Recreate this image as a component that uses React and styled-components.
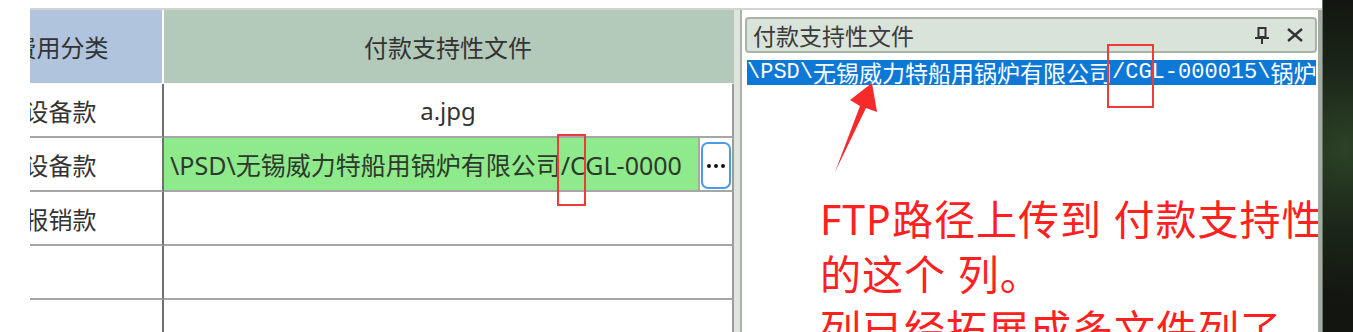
import React from "react";
import styled, { createGlobalStyle } from "styled-components";

const GlobalStyle = createGlobalStyle`
  html, body {
    margin: 0;
    padding: 0;
    background: #fff;
  }
  body {
    font-family: "Noto Sans", "Noto Sans CJK SC", sans-serif;
  }
`;

const Screen = styled.div`
  position: relative;
  display: flex;
  width: 1353px;
  height: 332px;
  overflow: hidden;
  background: #fff;
`;

const Gutter = styled.div`
  flex: none;
  width: 30px;
`;

const Workspace = styled.div`
  flex: none;
  width: 1292px;
  display: flex;
  flex-direction: column;
  padding-top: 8px;
  box-sizing: border-box;
`;

const Frame = styled.div`
  flex: 1;
  display: flex;
  min-height: 0;
  border-top: 2px solid #d3d3d3;
`;

const TableArea = styled.div`
  flex: none;
  width: 704px;
  overflow: hidden;
`;

// table is scrolled sideways, first column is partly hidden
const Grid = styled.div`
  display: grid;
  grid-template-columns: 205px 570px;
  grid-template-rows: 74px;
  grid-auto-rows: 54px;
  width: 775px;
  margin-left: -71px;
`;

const Cell = styled.div`
  box-sizing: border-box;
  display: flex;
  align-items: center;
  justify-content: center;
  overflow: hidden;
  white-space: nowrap;
  font-size: 24px;
  color: #333;
  border-bottom: 2px solid #a6a6a6;
  border-right: 2px solid ${(p) => (p.$first ? "#707070" : "#9c9c9c")};
`;

const HeadCell = styled(Cell)`
  background: ${(p) => (p.$tone === "blue" ? "#b0c4de" : "#b3c9ba")};
  border-bottom: 1px solid #fff;
  border-right: 2px solid ${(p) => (p.$first ? "#fff" : "transparent")};
`;

const EditCell = styled(Cell)`
  align-items: stretch;
  justify-content: flex-start;
`;

const Editor = styled.div`
  flex: 1;
  display: flex;
  align-items: center;
  padding-left: 6px;
  overflow: hidden;
  background: #8fea8c;
  border-right: 2px solid #a8a8a8;
  font-size: 25px;
  color: #2d392d;
`;

const DotsButton = styled.div`
  flex: none;
  width: 30px;
  margin: 4px 1px 1px 1px;
  box-sizing: border-box;
  display: flex;
  align-items: center;
  justify-content: center;
  gap: 3px;
  background: #fff;
  border: 2px solid #4b9be6;
  border-radius: 7px;
`;

const Dot = styled.span`
  width: 4px;
  height: 4px;
  border-radius: 50%;
  background: #111;
`;

const Splitter = styled.div`
  flex: none;
  width: 6px;
  background: #dde5dd;
`;

const Panel = styled.div`
  flex: none;
  width: 582px;
  box-sizing: border-box;
  padding: 7px 1px 0 3px;
  background: #fff;
  border-left: 2px solid #a9b3a9;
  border-right: 4px solid #a3ada3;
  overflow: hidden;
`;

const TitleBar = styled.div`
  height: 36px;
  box-sizing: border-box;
  display: flex;
  align-items: center;
  padding: 0 12px 0 6px;
  background: #d9e3d9;
  border: 2px solid #a9b4a9;
  border-radius: 4px;
  font-family: "Noto Sans CJK SC", sans-serif;
  font-size: 23px;
  color: #3b3b3b;
`;

const Title = styled.span`
  flex: 1;
`;

const TitleIcons = styled.div`
  display: flex;
  align-items: center;
  gap: 17px;
  color: #333;
`;

const Selection = styled.div`
  height: 25px;
  margin: 7px 1px 0 2px;
  display: flex;
  align-items: center;
  overflow: hidden;
  white-space: nowrap;
  background: #0e78d6;
  color: #fff;
`;

const Run = styled.span`
  flex: none;
  font-family: ${(p) =>
    p.$cjk ? '"Noto Sans CJK SC", sans-serif' : '"Liberation Mono", monospace'};
  font-size: ${(p) => (p.$cjk ? "23px" : "22px")};
  line-height: 25px;
`;

const Note = styled.div`
  margin: 107px 0 0 75px;
  white-space: nowrap;
  font-size: 41px;
  line-height: 55px;
  letter-spacing: 1px;
  color: #ff2020;
`;

const Desktop = styled.div`
  flex: none;
  width: 31px;
  border-left: 1px solid #6d736a;
  background: radial-gradient(circle at 70% 45%, #2c4227 0, #1b2518 45%, #121510 85%);
`;

const Mark = styled.div`
  position: absolute;
  left: ${(p) => p.$x}px;
  top: ${(p) => p.$y}px;
  width: ${(p) => p.$w}px;
  height: ${(p) => p.$h}px;
  box-sizing: border-box;
  border: 2px solid #f03a3a;
  pointer-events: none;
`;

const Arrow = styled.svg`
  position: absolute;
  left: 830px;
  top: 80px;
  pointer-events: none;
`;

function PinIcon() {
  return (
    <svg width="16" height="17" viewBox="0 0 16 17" fill="none" stroke="currentColor" strokeWidth="2">
      <rect x="4.5" y="1" width="7" height="9" />
      <line x1="1" y1="11" x2="15" y2="11" />
      <line x1="8" y1="11" x2="8" y2="17" />
    </svg>
  );
}

function CloseIcon() {
  return (
    <svg width="16" height="14" viewBox="0 0 16 14" fill="none" stroke="currentColor" strokeWidth="2.4">
      <line x1="1" y1="1" x2="15" y2="13" />
      <line x1="15" y1="1" x2="1" y2="13" />
    </svg>
  );
}

const rows = [
  { kind: "设备款", file: "a.jpg" },
  { kind: "设备款", edit: "\\PSD\\无锡威力特船用锅炉有限公司/CGL-0000" },
  { kind: "报销款" },
  {},
  {},
];

export default function App() {
  return (
    <>
      <GlobalStyle />
      <Screen>
        <Gutter />
        <Workspace>
          <Frame>
            <TableArea>
              <Grid>
                <HeadCell $first $tone="blue">费用分类</HeadCell>
                <HeadCell $tone="green">付款支持性文件</HeadCell>
                {rows.map((r, i) => (
                  <React.Fragment key={i}>
                    <Cell $first>{r.kind}</Cell>
                    {r.edit ? (
                      <EditCell>
                        <Editor>{r.edit}</Editor>
                        <DotsButton>
                          <Dot />
                          <Dot />
                          <Dot />
                        </DotsButton>
                      </EditCell>
                    ) : (
                      <Cell>{r.file}</Cell>
                    )}
                  </React.Fragment>
                ))}
              </Grid>
            </TableArea>
            <Splitter />
            <Panel>
              <TitleBar>
                <Title>付款支持性文件</Title>
                <TitleIcons>
                  <PinIcon />
                  <CloseIcon />
                </TitleIcons>
              </TitleBar>
              <Selection>
                <Run>\PSD\</Run>
                <Run $cjk>无锡威力特船用锅炉有限公司</Run>
                <Run>/CGL-000015\</Run>
                <Run $cjk>锅炉</Run>
              </Selection>
              <Note>
                FTP路径上传到 付款支持性
                <br />
                的这个 列。
                <br />
                列已经拓展成多文件列了
              </Note>
            </Panel>
          </Frame>
        </Workspace>
        <Desktop />

        <Mark $x={557} $y={134} $w={29} $h={72} />
        <Mark $x={1107} $y={44} $w={47} $h={64} />
        <Arrow width="55" height="96" viewBox="0 0 55 96">
          <polygon points="42,3 47,32 36,28 5,92 30,26 20,20" fill="#f52a2a" />
        </Arrow>
      </Screen>
    </>
  );
}
